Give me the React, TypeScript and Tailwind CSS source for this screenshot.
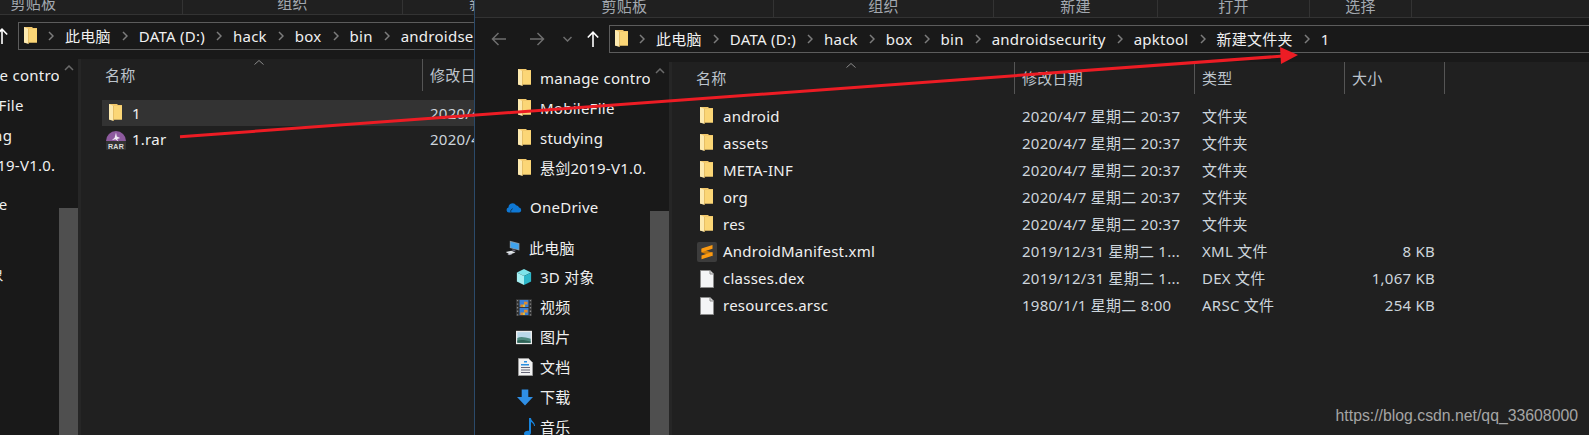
import { ReactNode } from 'react'

const uiFont = `[font-family:'Noto_Sans','Noto_Sans_CJK_SC',sans-serif]`

const ribbonGroups = [
  { label: '剪贴板', width: 'w-[298px]' },
  { label: '组织', width: 'w-[220px]' },
  { label: '新建', width: 'w-[164px]' },
  { label: '打开', width: 'w-[152px]' },
  { label: '选择', width: 'w-[102px]' },
]

const crumbs = ['此电脑', 'DATA (D:)', 'hack', 'box', 'bin', 'androidsecurity', 'apktool', '新建文件夹', '1']

function FolderIcon() {
  return (
    <svg width="13" height="19" viewBox="0 0 13 19" className="shrink-0">
      <path d="M0 0h8l1 1h4v14.500H0z" fill="#f3c96c" />
      <path d="M4.500 2H13v13.500H4.500z" fill="#fbd676" />
      <path d="M0 0l4.500 2v15L0 15.500z" fill="#fdeab0" />
      <path d="M4.500 2v15" stroke="#d9ab4c" strokeWidth="0.6" />
    </svg>
  )
}

function RarIcon() {
  return (
    <svg width="20" height="20" viewBox="0 0 20 20" className="shrink-0">
      <path d="M0 11a10 10 0 0 1 20 0z" fill="#8d5a9e" />
      <rect x="0" y="11" width="20" height="9" rx="1" fill="#333" />
      <path d="M10 2.500l.8 4 3.400 1.600-3 .8 1.300 2.600-3.200-2.300-3.500 1 2.800-2.500z" fill="#f2ecf5" />
      <text x="10" y="18.500" textAnchor="middle" fontSize="7" fontWeight="700" fontFamily="Liberation Sans" fill="#ddd">
        RAR
      </text>
    </svg>
  )
}

function SublimeIcon() {
  return (
    <svg width="20" height="20" viewBox="0 0 20 20" className="shrink-0">
      <rect width="20" height="20" rx="2" fill="#3c3c3c" />
      <path d="M4.500 7l11 3.800v3.400L4.500 10.400z" fill="#c97a0a" />
      <path d="M4.500 6.500l11-3.500v3.700L4.500 10.200z" fill="#fb9a12" />
      <path d="M4.500 13.500l11-3.500v3.700l-11 3.500z" fill="#fb9a12" />
    </svg>
  )
}

function FileIcon() {
  return (
    <svg width="14" height="18" viewBox="0 0 14 18" className="shrink-0">
      <path d="M.5.5H10L13.500 4v13.500H.5z" fill="#f4f5f6" stroke="#8b8b8b" />
      <path d="M10 .5V4h3.500" fill="#ddd" stroke="#8b8b8b" />
    </svg>
  )
}

function OneDriveIcon() {
  return (
    <svg width="19" height="13" viewBox="0 0 19 13">
      <path d="M3.500 12.500a3 3 0 0 1-.6-5.900A5 5 0 0 1 12 3.800a3.800 3.800 0 0 1 3.500 2.800 3 3 0 0 1 .2 5.900z" fill="#0f78d4" />
      <path d="M6 12.500c-1-1.800 0-4 2-4.500" stroke="#161616" strokeWidth="0.8" fill="none" />
    </svg>
  )
}

function ComputerIcon() {
  return (
    <svg width="20" height="20" viewBox="0 0 20 20">
      <path d="M6 1l12 3v9L6 10z" fill="#8a99a6" />
      <path d="M7 2.500L17 5v7L7 9.500z" fill="#3fa3ee" />
      <path d="M9 11.500l4 .8v2l-4-.8z" fill="#667" />
      <path d="M1 15l7-1.500 5 2L6 18z" fill="#dfe3e6" />
      <path d="M3 18l4-1 2 .8L5 19z" fill="#aab" />
    </svg>
  )
}

function CubeIcon() {
  return (
    <svg width="18" height="18" viewBox="0 0 18 18">
      <path d="M9 0l8 4-8 4-8-4z" fill="#7de3ea" />
      <path d="M1 4l8 4v10l-8-4z" fill="#a5eff2" />
      <path d="M17 4L9 8v10l8-4z" fill="#2cb6c9" />
    </svg>
  )
}

function VideoIcon() {
  return (
    <svg width="18" height="19" viewBox="0 0 18 19">
      <rect width="18" height="19" fill="#333" />
      <path d="M1 1h1.500v1.500H1zM1 5h1.500v1.500H1zM1 9h1.500v1.500H1zM1 13h1.500v1.500H1zM1 17h1.500v1.500H1zM15.500 1H17v1.500h-1.500zM15.500 5H17v1.500h-1.500zM15.500 9H17v1.500h-1.500zM15.500 13H17v1.500h-1.500zM15.500 17H17v1.500h-1.500z" fill="#888" />
      <rect x="4" y="1" width="10" height="8" fill="#3a7fd6" />
      <rect x="4" y="10" width="10" height="8" fill="#3a7fd6" />
      <path d="M5 6h3v3H5zM9 3h4v3H9zM5 15h3v3H5zM9 12h4v3H9z" fill="#e08a2c" />
      <path d="M8 6h2v3H8zM8 15h2v3H8z" fill="#e7c33c" />
    </svg>
  )
}

function PictureIcon() {
  return (
    <svg width="18" height="15" viewBox="0 0 18 15">
      <rect width="18" height="15" fill="#ececec" />
      <rect x="1.500" y="1.500" width="15" height="12" fill="#b9d8ea" />
      <path d="M1.500 8c4-2 8-1 15 1v4.500h-15z" fill="#4d8a80" />
      <path d="M1.500 11c5-1.500 9-.5 15 1v1.500h-15z" fill="#2f6255" />
    </svg>
  )
}

function DocIcon() {
  return (
    <svg width="15" height="18" viewBox="0 0 15 18">
      <path d="M.5.5h10l4 4v13H.5z" fill="#f2f2f2" stroke="#999" />
      <path d="M6 3h3v1.500H6zM3 6h8v1.500H3z" fill="#2a8fe0" />
      <path d="M3 9h9v1H3zM3 11.500h9v1H3zM3 14h9v1H3z" fill="#667" />
    </svg>
  )
}

function DownloadIcon() {
  return (
    <svg width="17" height="17" viewBox="0 0 17 17">
      <path d="M5 0h7v8h5l-8.500 9L0 8h5z" fill="#2f8fe6" />
    </svg>
  )
}

function MusicIcon() {
  return (
    <svg width="11" height="18" viewBox="0 0 11 18">
      <path d="M5 0h2c0 3 4 4 4 8h-1c0-2-2-3.500-3-4v10.500c0 2-2 3.500-4.200 3.500C1 18 0 17 0 15.500 0 13.500 2.500 12.300 5 12.800z" fill="#1784dd" />
    </svg>
  )
}

type NavItem = { icon: ReactNode; label: string; className: string; labelClassName: string }

const navItems: NavItem[] = [
  { icon: <FolderIcon />, label: 'manage control', className: 'pl-[41px]', labelClassName: 'ml-[8px]' },
  { icon: <FolderIcon />, label: 'MobileFile', className: 'pl-[41px]', labelClassName: 'ml-[8px]' },
  { icon: <FolderIcon />, label: 'studying', className: 'pl-[41px]', labelClassName: 'ml-[8px]' },
  { icon: <FolderIcon />, label: '悬剑2019-V1.0.', className: 'pl-[41px]', labelClassName: 'ml-[8px]' },
  { icon: <OneDriveIcon />, label: 'OneDrive', className: 'mt-[9px] pl-[31px]', labelClassName: 'ml-[8px]' },
  { icon: <ComputerIcon />, label: '此电脑', className: 'mt-[11px] pl-[30px]', labelClassName: 'ml-[8px]' },
  { icon: <CubeIcon />, label: '3D 对象', className: '-mt-[1px] pl-[41px]', labelClassName: 'ml-[8px]' },
  { icon: <VideoIcon />, label: '视频', className: 'pl-[41px]', labelClassName: 'ml-[8px]' },
  { icon: <PictureIcon />, label: '图片', className: 'pl-[41px]', labelClassName: 'ml-[8px]' },
  { icon: <DocIcon />, label: '文档', className: 'pl-[42px]', labelClassName: 'ml-[7px]' },
  { icon: <DownloadIcon />, label: '下载', className: 'pl-[42px]', labelClassName: 'ml-[7px]' },
  { icon: <MusicIcon />, label: '音乐', className: 'pl-[46px]', labelClassName: 'ml-[3px]' },
]

type FileRow = { icon: ReactNode; iconBox: string; name: string; date: string; type: string; size?: string; active?: boolean }

const folderBox = 'ml-[4px] w-[23px]'
const folderDate = '2020/4/7 星期二 20:37'

const rightRows: FileRow[] = [
  { icon: <FolderIcon />, iconBox: folderBox, name: 'android', date: folderDate, type: '文件夹' },
  { icon: <FolderIcon />, iconBox: folderBox, name: 'assets', date: folderDate, type: '文件夹' },
  { icon: <FolderIcon />, iconBox: folderBox, name: 'META-INF', date: folderDate, type: '文件夹' },
  { icon: <FolderIcon />, iconBox: folderBox, name: 'org', date: folderDate, type: '文件夹' },
  { icon: <FolderIcon />, iconBox: folderBox, name: 'res', date: folderDate, type: '文件夹' },
  { icon: <SublimeIcon />, iconBox: 'ml-[1px] w-[26px]', name: 'AndroidManifest.xml', date: '2019/12/31 星期二 1...', type: 'XML 文件', size: '8 KB' },
  { icon: <FileIcon />, iconBox: folderBox, name: 'classes.dex', date: '2019/12/31 星期二 1...', type: 'DEX 文件', size: '1,067 KB' },
  { icon: <FileIcon />, iconBox: folderBox, name: 'resources.arsc', date: '1980/1/1 星期二 8:00', type: 'ARSC 文件', size: '254 KB' },
]

const leftRows: FileRow[] = [
  { icon: <FolderIcon />, iconBox: 'ml-[7px] w-[23px]', name: '1', date: folderDate, type: '文件夹', active: true },
  { icon: <RarIcon />, iconBox: 'ml-[4px] w-[26px]', name: '1.rar', date: folderDate, type: 'RAR 文件' },
]

function Chevron() {
  return (
    <svg width="6" height="10" viewBox="0 0 6 10" className="mx-[11px] shrink-0">
      <path d="M1 1l4 4-4 4" fill="none" stroke="#7c7c7c" strokeWidth="1.5" />
    </svg>
  )
}

function NavButtons() {
  return (
    <div className="flex h-[28px] w-[134px] shrink-0 items-center pl-[16px]">
      <svg width="15" height="14" viewBox="0 0 15 14" className="shrink-0">
        <path d="M15 7H1.500M7.500 1l-6 6 6 6" fill="none" stroke="#6e6e6e" strokeWidth="1.5" />
      </svg>
      <svg width="15" height="14" viewBox="0 0 15 14" className="ml-[24px] shrink-0">
        <path d="M0 7h13.500M7.500 1l6 6-6 6" fill="none" stroke="#6e6e6e" strokeWidth="1.5" />
      </svg>
      <svg width="9" height="6" viewBox="0 0 9 6" className="ml-[18px] shrink-0">
        <path d="M.5 1l4 4 4-4" fill="none" stroke="#6e6e6e" strokeWidth="1.5" />
      </svg>
      <svg width="12" height="16" viewBox="0 0 12 16" className="ml-[15px] shrink-0">
        <path d="M6 16V1.500M.8 6.500L6 1.200l5.200 5.300" fill="none" stroke="#fff" strokeWidth="1.6" />
      </svg>
    </div>
  )
}

function AddressBar() {
  return (
    <div className="flex h-[28px] w-[1200px] shrink-0 items-center border border-[#5c5c5c] bg-[#191919] pl-[5px] text-[15px] text-[#f0f0f0]">
      <FolderIcon />
      {crumbs.map((crumb) => (
        <div key={crumb} className="flex items-center whitespace-nowrap">
          <Chevron />
          <span>{crumb}</span>
        </div>
      ))}
    </div>
  )
}

function Sidebar() {
  return (
    <div className="flex w-[194px] shrink-0">
      <div className="w-[175px] overflow-hidden pt-px">
        {navItems.map((item) => (
          <div key={item.label} className={`flex h-[30px] items-center whitespace-nowrap text-[15px] text-[#f0f0f0] ${item.className}`}>
            <span className="flex w-[16px] shrink-0 justify-center">{item.icon}</span>
            <span className={item.labelClassName}>{item.label}</span>
          </div>
        ))}
      </div>
      <div className="flex w-[19px] flex-col">
        <div className="flex h-[149px] justify-center pt-[6px]">
          <svg width="10" height="6" viewBox="0 0 10 6">
            <path d="M1 5l4-4 4 4" fill="none" stroke="#6a6a6a" strokeWidth="1.5" />
          </svg>
        </div>
        <div className="flex-1 bg-[#4f4f4f]" />
      </div>
    </div>
  )
}

function ColumnHeader({ label, className }: { label: string; className: string }) {
  return (
    <div className={`flex h-[32px] shrink-0 items-center whitespace-nowrap border-r border-[#555] pl-[7px] text-[15px] text-[#bcc4cc] ${className}`}>
      {label}
    </div>
  )
}

type FileListProps = { rows: FileRow[]; nameHeader: string; nameCell: string; caretClass: string; rowsClass: string; rowWidth: string }

function FileList({ rows, nameHeader, nameCell, caretClass, rowsClass, rowWidth }: FileListProps) {
  return (
    <div className="flex-1 bg-[#202020]">
      <div className="flex">
        <div className={`flex h-[32px] shrink-0 flex-col whitespace-nowrap border-r border-[#555] text-[15px] text-[#bcc4cc] ${nameHeader}`}>
          <svg width="10" height="5" viewBox="0 0 10 5" className={`mt-px ${caretClass}`}>
            <path d="M.5 4.500L5 .5l4.500 4" fill="none" stroke="#8a8a8a" />
          </svg>
          <span className="-mt-[1px] pl-[24px]">名称</span>
        </div>
        <ColumnHeader label="修改日期" className="w-[180px]" />
        <ColumnHeader label="类型" className="w-[150px]" />
        <ColumnHeader label="大小" className="w-[100px]" />
      </div>
      <div className={rowsClass}>
        {rows.map((row) => (
          <div
            key={row.name}
            className={`flex items-center whitespace-nowrap text-[15px] text-[#f0f0f0] ${rowWidth} ${row.active ? 'h-[26px] bg-[#333]' : 'h-[27px]'}`}
          >
            <span className={`flex shrink-0 ${row.iconBox}`}>{row.icon}</span>
            <span className={`shrink-0 ${nameCell}`}>{row.name}</span>
            <span className="w-[180px] shrink-0 overflow-hidden text-[#cdd5dc]">{row.date}</span>
            <span className="w-[150px] shrink-0 text-[#cdd5dc]">{row.type}</span>
            <span className="-ml-[7px] w-[90px] shrink-0 text-right text-[#cdd5dc]">{row.size}</span>
          </div>
        ))}
      </div>
    </div>
  )
}

function Explorer({ children }: { children: ReactNode }) {
  return (
    <div className={`flex h-[438px] w-[1114px] flex-col overflow-hidden bg-[#191919] tracking-[0.25px] ${uiFont}`}>
      <div className="flex h-[18px] shrink-0 border-b border-[#333] bg-[#202020] pl-[1px]">
        {ribbonGroups.map((group) => (
          <div
            key={group.label}
            className={`flex shrink-0 items-end justify-center overflow-hidden border-r border-[#333] pb-[1px] text-[15px] leading-[20px] text-[#a3a9b0] ${group.width}`}
          >
            {group.label}
          </div>
        ))}
      </div>
      <div className="flex h-[44px] shrink-0 items-start overflow-hidden pt-[7px]">
        <NavButtons />
        <AddressBar />
      </div>
      <div className="flex min-h-0 flex-1">
        <Sidebar />
        <div className="w-[3px] shrink-0 bg-[#262626]" />
        {children}
      </div>
    </div>
  )
}

export default function App() {
  return (
    <div className="relative flex h-[435px] w-[1589px] overflow-hidden bg-[#191919]">
      <div className="w-[474px] shrink-0 overflow-hidden">
        <div className="-ml-[116px] -mt-[3px]">
          <Explorer>
            <FileList
              rows={leftRows}
              nameHeader="w-[342px]"
              nameCell="w-[298px]"
              caretClass="ml-[173px]"
              rowsClass="pl-[21px] pt-[9px]"
              rowWidth="w-[700px]"
            />
          </Explorer>
        </div>
      </div>
      <div className="flex-1 overflow-hidden border-l border-[#2b4a6a]">
        <Explorer>
          <FileList
            rows={rightRows}
            nameHeader="w-[343px]"
            nameCell="w-[299px]"
            caretClass="ml-[174px]"
            rowsClass="pl-[24px] pt-[9px]"
            rowWidth="w-[800px]"
          />
        </Explorer>
      </div>

      <svg width="1589" height="435" viewBox="0 0 1589 435" className="pointer-events-none absolute left-0 top-0">
        <path d="M180 136.700L1284 56" stroke="#ed1c24" strokeWidth="3" fill="none" />
        <path d="M1280 47l18 8-17 9z" fill="#ed1c24" />
      </svg>

      <span className="absolute right-[11px] top-[404px] text-[15.8px] text-[#a5a5a5] [font-family:'Liberation_Sans',sans-serif]">
        https://blog.csdn.net/qq_33608000
      </span>
    </div>
  )
}
